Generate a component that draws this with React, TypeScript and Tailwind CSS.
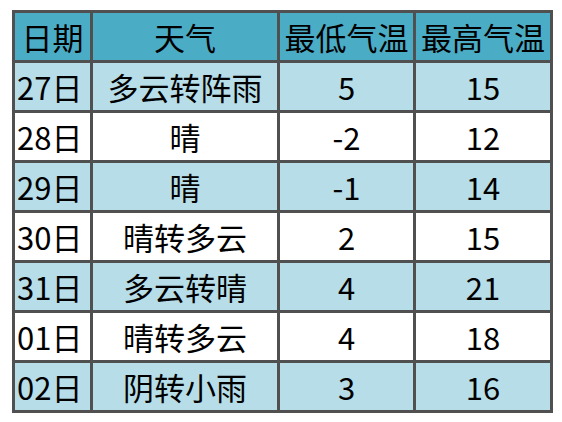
const rows = [
  { date: '27日', weather: '多云转阵雨', low: '5', high: '15' },
  { date: '28日', weather: '晴', low: '-2', high: '12' },
  { date: '29日', weather: '晴', low: '-1', high: '14' },
  { date: '30日', weather: '晴转多云', low: '2', high: '15' },
  { date: '31日', weather: '多云转晴', low: '4', high: '21' },
  { date: '01日', weather: '晴转多云', low: '4', high: '18' },
  { date: '02日', weather: '阴转小雨', low: '3', high: '16' },
];

export default function App() {
  return (
    <div
      className="w-[562px] h-[422px] bg-white pt-[10px] pl-[12px]"
      style={{ fontFamily: '"Noto Sans CJK SC", "Noto Sans", sans-serif' }}
    >
      <table className="table-fixed border-collapse w-[538px] text-[31px] leading-none text-black">
        <colgroup>
          <col className="w-[78px]" />
          <col className="w-[187px]" />
          <col className="w-[136px]" />
          <col className="w-[137px]" />
        </colgroup>
        <thead>
          <tr className="h-[50px] bg-[#4bacc6]">
            <th className="border-[3px] border-[#505050] font-normal text-center p-0 whitespace-nowrap">日期</th>
            <th className="border-[3px] border-[#505050] font-normal text-center p-0">天气</th>
            <th className="border-[3px] border-[#505050] font-normal text-center p-0 whitespace-nowrap">最低气温</th>
            <th className="border-[3px] border-[#505050] font-normal text-center p-0 whitespace-nowrap">最高气温</th>
          </tr>
        </thead>
        <tbody>
          {rows.map((r, i) => (
            <tr key={r.date} className={i % 2 === 0 ? 'h-[50px] bg-[#b7dde8]' : 'h-[50px] bg-white'}>
              <td className="border-[3px] border-[#505050] text-left pl-[2px] pr-0 py-0 whitespace-nowrap">{r.date}</td>
              <td className="border-[3px] border-[#505050] text-center p-0">{r.weather}</td>
              <td className="border-[3px] border-[#505050] text-center p-0">{r.low}</td>
              <td className="border-[3px] border-[#505050] text-center p-0">{r.high}</td>
            </tr>
          ))}
        </tbody>
      </table>
    </div>
  );
}
